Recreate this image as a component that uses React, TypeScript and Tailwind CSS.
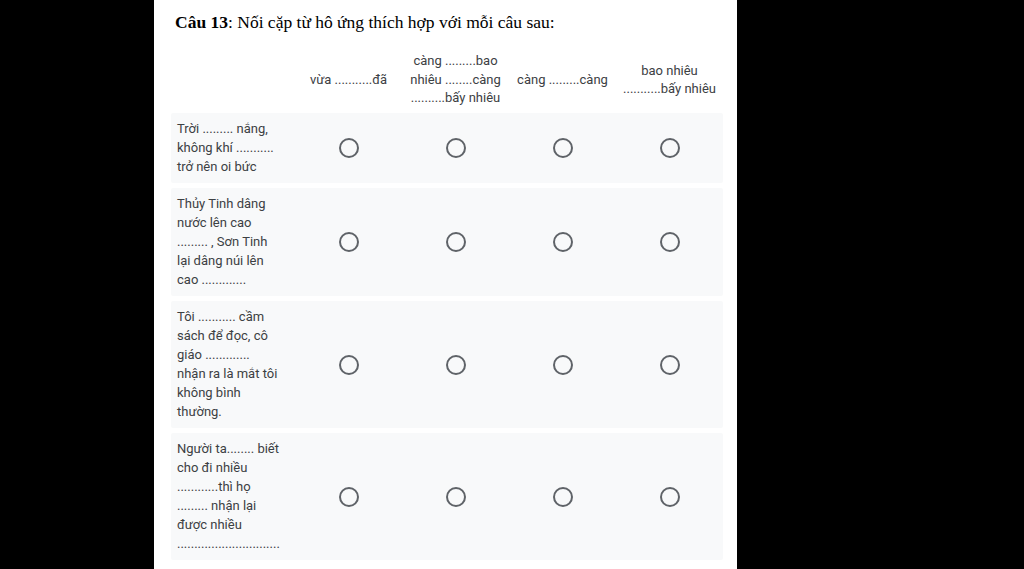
const columns = [
    ["vừa ...........đã"],
    ["càng .........bao", "nhiêu ........càng", "..........bấy nhiêu"],
    ["càng .........càng"],
    ["bao nhiêu", "...........bấy nhiêu"],
];

const rows = [
    ["Trời ......... nắng,", "không khí ...........", "trở nên oi bức"],
    ["Thủy Tinh dâng", "nước lên cao", "......... , Sơn Tinh", "lại dâng núi lên", "cao ............."],
    ["Tôi ........... cầm", "sách để đọc, cô", "giáo .............", "nhận ra là mắt tôi", "không bình", "thường."],
    ["Người ta........ biết", "cho đi nhiều", "............thì họ", "......... nhận lại", "được nhiều", ".............................."],
];

function Radio() {
    return <div className="w-[20px] h-[20px] rounded-full border-2 border-[#5f6368]" />;
}

export default function App() {
    return (
        <div className="w-[1024px] h-[569px] bg-black flex overflow-hidden">
            <div className="ml-[154px] w-[583px] h-full bg-white overflow-hidden">
                <div className="pl-[21px] pt-[10px] text-[17.5px] leading-[24px] text-black font-['Liberation_Serif',serif] whitespace-nowrap">
                    <span className="font-bold">Câu 13</span>: Nối cặp từ hô ứng thích hợp với mỗi câu sau:
                </div>

                <div className="pl-[17px] mt-[18px] font-['Roboto',sans-serif]">
                    <div className="w-[552px] grid grid-cols-[124px_repeat(4,107px)] items-center h-[56px] text-[13px] leading-[18.5px] text-[#3c4043]">
                        <div />
                        {columns.map((lines, i) => (
                            <div key={i} className="text-center px-[4px]">
                                {lines.map((l, j) => (
                                    <div key={j} className="whitespace-nowrap">{l}</div>
                                ))}
                            </div>
                        ))}
                    </div>

                    <div className="mt-[5px] w-[552px] flex flex-col gap-[5px]">
                        {rows.map((lines, i) => (
                            <div key={i} className="grid grid-cols-[124px_repeat(4,107px)] items-center bg-[#f8f9fa] rounded-[2px]">
                                <div className="pl-[6px] pt-[6px] pb-[7px] text-[13px] leading-[19px] text-[#3c4043]">
                                    {lines.map((l, j) => (
                                        <div key={j} className="whitespace-nowrap">{l}</div>
                                    ))}
                                </div>
                                {columns.map((_, k) => (
                                    <div key={k} className="flex justify-center">
                                        <Radio />
                                    </div>
                                ))}
                            </div>
                        ))}
                    </div>
                </div>
            </div>
        </div>
    );
}
